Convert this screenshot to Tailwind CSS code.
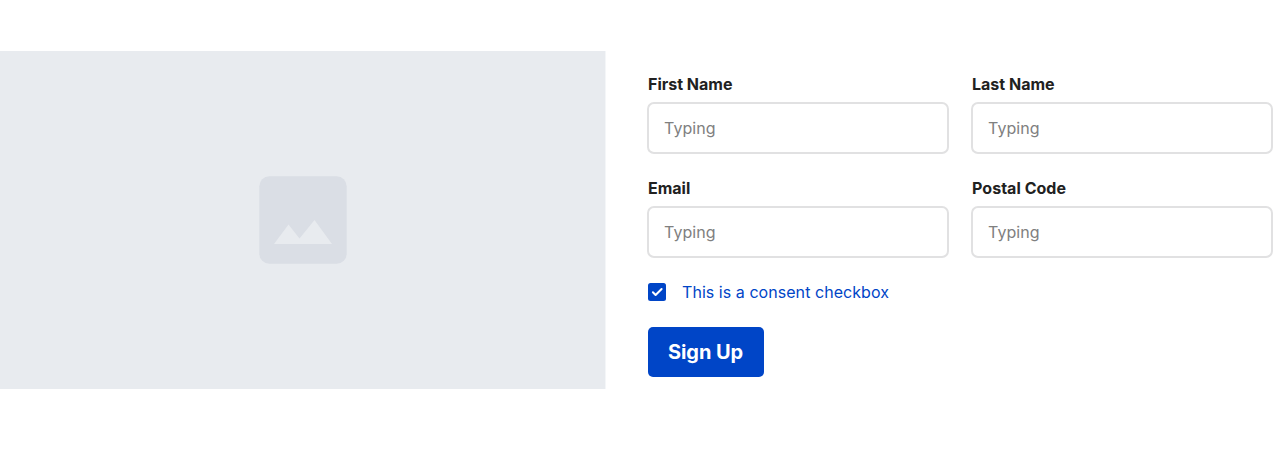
<!DOCTYPE html>
<html lang="en"><head><meta charset="utf-8"><title>Sign Up</title>
<script src="https://cdn.jsdelivr.net/npm/@tailwindcss/browser@4"></script></head>
<body class="h-[450px] overflow-hidden bg-white font-['Inter',sans-serif] text-[#212121]">
<main class="flex pt-[51px]">
<div class="flex h-[338px] w-[605px] shrink-0 items-center justify-center border-r border-[#f4f6f8] box-content bg-[#e8ebef]">
<svg width="88" height="88" viewBox="0 0 88 88" fill="none" aria-hidden="true">
<rect x=".3" y=".3" width="87.4" height="87.4" rx="10" fill="#dadee5"/>
<path d="M15 68 29.500 48.500 40.500 62.500 55.500 44 73 68Z" fill="#e8ebef"/></svg>
</div>
<form class="ml-[41px] w-[626px] shrink-0 pt-[21px]">
<div class="grid grid-cols-[302px_302px] gap-x-[22px] gap-y-[20px]">
<label class="block h-[84px] text-base leading-6 font-bold"><span class="block pl-px pb-[6px]">First Name</span><input class="block h-[52px] w-full rounded-[7px] border-2 border-[#e1e1e2] px-[15px] text-base font-normal tracking-[0.08px] placeholder:text-[#808080]" placeholder="Typing"></label>
<label class="block h-[84px] text-base leading-6 font-bold"><span class="block pl-px pb-[6px]">Last Name</span><input class="block h-[52px] w-full rounded-[7px] border-2 border-[#e1e1e2] px-[15px] text-base font-normal tracking-[0.08px] placeholder:text-[#808080]" placeholder="Typing"></label>
<label class="block h-[84px] text-base leading-6 font-bold"><span class="block pl-px pb-[6px]">Email</span><input class="block h-[52px] w-full rounded-[7px] border-2 border-[#e1e1e2] px-[15px] text-base font-normal tracking-[0.08px] placeholder:text-[#808080]" placeholder="Typing"></label>
<label class="block h-[84px] text-base leading-6 font-bold"><span class="block pl-px pb-[6px] tracking-[0.04px]">Postal Code</span><input class="block h-[52px] w-full rounded-[7px] border-2 border-[#e1e1e2] px-[15px] text-base font-normal tracking-[0.08px] placeholder:text-[#808080]" placeholder="Typing"></label>
</div>
<div class="mt-[20px] ml-px flex h-6 items-center gap-4 text-base tracking-[0.05px] text-[#0045c7]">
<svg width="18" height="18" viewBox="0 0 18 18"><rect width="18" height="18" rx="2.500" fill="#0045c7"/><path d="m4.900 9.300 2.700 2.700 6-6" fill="none" stroke="white" stroke-width="2" stroke-linecap="round" stroke-linejoin="round"/></svg>
<span>This is a consent checkbox</span></div>
<button type="button" class="mt-[23px] ml-px h-[50px] w-[116px] rounded-[5px] bg-[#0045c7] pr-[1px] text-xl font-bold tracking-[-0.05px] text-white">Sign Up</button>
</form></main></body></html>
